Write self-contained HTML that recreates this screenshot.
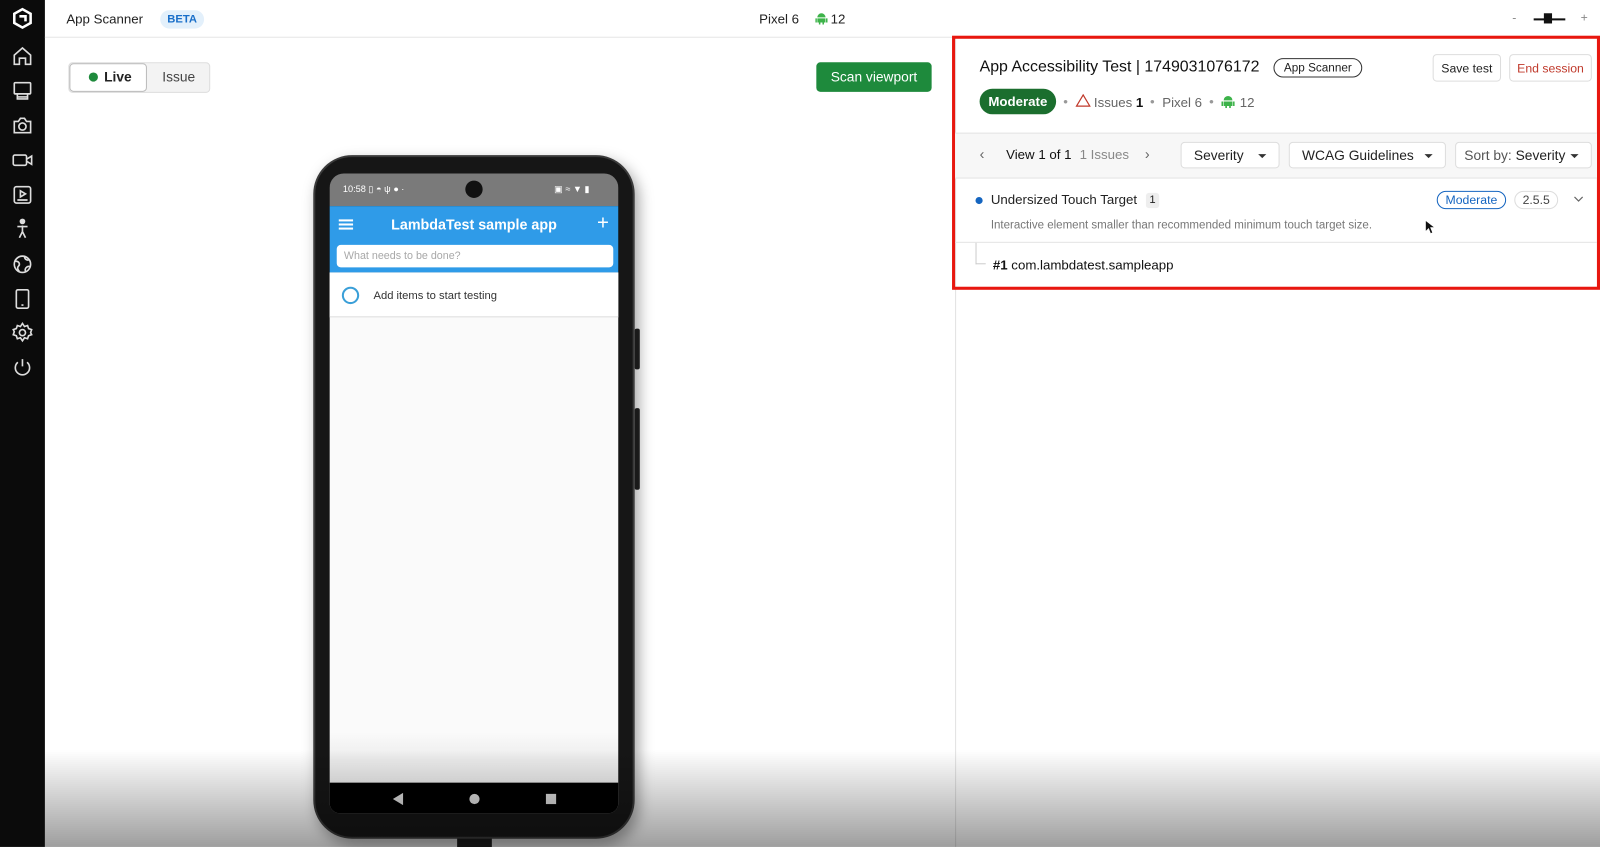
<!DOCTYPE html>
<html><head><meta charset="utf-8"><style>
*{box-sizing:border-box;margin:0;padding:0}
html,body{width:1600px;height:847px;overflow:hidden;background:#fff;font-family:"Liberation Sans",sans-serif;color:#222}
#w{position:absolute;left:0;top:0;width:1568px;height:830px;transform:scale(1.020408);transform-origin:0 0;overflow:hidden;background:#fff}
.a{position:absolute}
.side{left:0;top:0;width:44px;height:830px;background:#0b0b0b}
.side svg{position:absolute;left:11px;width:22px;height:22px}
.t{white-space:nowrap}
.btn{position:absolute;border:1px solid #ddd;border-radius:4px;background:#fff;font-size:12px;display:flex;align-items:center;justify-content:center}
.dd{position:absolute;top:139px;height:26px;border:1px solid #ddd;border-radius:4px;background:#fff;font-size:13.5px;display:flex;align-items:center;padding-left:12px;color:#222}
.dd:after{content:"";position:absolute;right:12px;top:11px;border:4px solid transparent;border-top:4px solid #333}
</style></head><body><div id="w">
<div class="a side">
<svg style="top:7px" viewBox="0 0 22 22"><path d="M11 2l8 4.5v9L11 20l-8-4.5v-9z" fill="none" stroke="#fff" stroke-width="2.5"/><path d="M8 9h6v5" fill="none" stroke="#fff" stroke-width="2.5"/></svg>
<svg style="top:44px" viewBox="0 0 22 22" fill="none" stroke="#ddd" stroke-width="1.6"><path d="M3 10l8-7 8 7v9h-5v-6h-6v6H3z"/></svg>
<svg style="top:78px" viewBox="0 0 22 22" fill="none" stroke="#ddd" stroke-width="1.6"><rect x="3" y="3" width="16" height="11" rx="1"/><path d="M6 14v5h10v-5M6 17h10"/></svg>
<svg style="top:112px" viewBox="0 0 22 22" fill="none" stroke="#ddd" stroke-width="1.6"><path d="M3 7h4l2-3h4l2 3h4v11H3z"/><circle cx="11" cy="12" r="3.5"/></svg>
<svg style="top:146px" viewBox="0 0 22 22" fill="none" stroke="#ddd" stroke-width="1.6"><rect x="2" y="6" width="13" height="10" rx="1.5"/><path d="M15 10l5-3v8l-5-3"/></svg>
<svg style="top:180px" viewBox="0 0 22 22" fill="none" stroke="#ddd" stroke-width="1.6"><rect x="3" y="3" width="16" height="16" rx="2"/><path d="M9 7l5 3-5 3z M6 16h10"/></svg>
<svg style="top:213px" viewBox="0 0 22 22" fill="none" stroke="#ddd" stroke-width="1.6"><circle cx="11" cy="4" r="2" fill="#ddd"/><path d="M6 9h10M11 8v6l-3 6M11 14l3 6"/></svg>
<svg style="top:248px" viewBox="0 0 22 22" fill="none" stroke="#ddd" stroke-width="1.6"><circle cx="11" cy="11" r="8"/><path d="M4 8c4 0 5 3 3 5s1 5 1 5M13 3c0 3 2 4 4 4M18 13c-3 0-5 2-4 5"/></svg>
<svg style="top:282px" viewBox="0 0 22 22" fill="none" stroke="#ddd" stroke-width="1.6"><rect x="5" y="2" width="12" height="18" rx="1.5"/><path d="M10 17h2"/></svg>
<svg style="top:315px" viewBox="0 0 22 22" fill="none" stroke="#ddd" stroke-width="1.6"><circle cx="11" cy="11" r="3"/><path d="M11 2l2 3 3-1 1 3 3 1-1 3 1 2-3 1-1 3-3-1-2 3-2-3-3 1-1-3-3-1 1-3-1-2 3-1 1-3 3 1z"/></svg>
<svg style="top:349px" viewBox="0 0 22 22" fill="none" stroke="#ddd" stroke-width="1.6"><path d="M11 3v7M6.5 6a7 7 0 1 0 9 0"/></svg>
</div>
<div class="a" style="left:44px;top:0;width:1524px;height:37px;border-bottom:1px solid #e6e6e6"></div>
<div class="a t" style="left:65px;top:11px;font-size:13px">App Scanner</div>
<div class="a t" style="left:157px;top:10px;width:43px;height:18px;border-radius:9px;background:#e3f0fb;color:#1a6fc9;font-size:11px;font-weight:bold;text-align:center;line-height:18px">BETA</div>
<div class="a t" style="left:744px;top:11px;font-size:13px">Pixel 6</div>
<svg class="a" style="left:799px;top:12px" width="12" height="12" viewBox="0 0 12 12"><path d="M2 5a4 4 0 0 1 8 0z M2 6h8v4H2z M0 6h1.5v4H0z M10.5 6H12v4h-1.5z M3.5 10h1.5v2H3.5z M7 10h1.5v2H7z" fill="#3db34a"/></svg>
<div class="a t" style="left:814px;top:11px;font-size:13px">12</div>
<div class="a t" style="left:1482px;top:10px;font-size:12px;color:#888">-</div>
<div class="a" style="left:1503px;top:18px;width:31px;height:1.5px;background:#111"></div>
<div class="a" style="left:1513px;top:13px;width:8px;height:10px;background:#111"></div>
<div class="a t" style="left:1549px;top:10px;font-size:12px;color:#888">+</div>
<div class="a" style="left:67px;top:61px;width:139px;height:30px;border:1px solid #ddd;border-radius:4px;background:#f3f3f3"></div>
<div class="a" style="left:68px;top:62px;width:76px;height:28px;border:1px solid #bbb;border-radius:4px;background:#fff"></div>
<div class="a" style="left:87px;top:71px;width:9px;height:9px;border-radius:50%;background:#1e8a3c"></div>
<div class="a t" style="left:102px;top:68px;font-size:13.5px;font-weight:bold;color:#222">Live</div>
<div class="a t" style="left:159px;top:68px;font-size:13.5px;color:#444">Issue</div>
<div class="a t" style="left:800px;top:61px;width:113px;height:29px;border-radius:4px;background:#1e8a3c;color:#fff;font-size:13.5px;text-align:center;line-height:29px">Scan viewport</div>
<div class="a" style="left:936px;top:37px;width:1px;height:793px;background:#e2e2e2"></div>
<div class="a" style="left:622px;top:322px;width:5px;height:40px;background:#222;border-radius:2px"></div>
<div class="a" style="left:622px;top:400px;width:5px;height:80px;background:#222;border-radius:2px"></div>
<div class="a" style="left:448px;top:818px;width:34px;height:14px;background:#222"></div>
<div class="a" style="left:307px;top:152px;width:315px;height:670px;border-radius:38px;background:#161616;border:2px solid #3a3a3a;box-shadow:4px 6px 14px rgba(0,0,0,.35)"></div>
<div class="a" style="left:323px;top:170px;width:283px;height:627px;border-radius:14px 14px 10px 10px;background:#000;overflow:hidden">
 <div class="a" style="left:0;top:0;width:283px;height:32px;background:#7a7a7a"></div>
 <div class="a t" style="left:13px;top:10px;font-size:9px;color:#fff">10:58 &#9647; &#9683; &#968; &#9679; &#183;</div>
 <div class="a t" style="left:220px;top:10px;font-size:9px;color:#fff">&#9635; &#8776; &#9660; &#9646;</div>
 <div class="a" style="left:133px;top:7px;width:17px;height:17px;border-radius:50%;background:#111"></div>
 <div class="a" style="left:0;top:32px;width:283px;height:65px;background:#2f9be8"></div>
 <div class="a" style="left:9px;top:45px;width:14px;height:2px;background:#fff;box-shadow:0 4px #fff,0 8px #fff"></div>
 <div class="a t" style="left:0;top:42px;width:283px;text-align:center;font-size:14px;font-weight:bold;color:#fff">LambdaTest sample app</div>
 <div class="a t" style="left:262px;top:38px;font-size:20px;color:#fff">+</div>
 <div class="a" style="left:7px;top:70px;width:271px;height:22px;border-radius:4px;background:#fff"></div>
 <div class="a t" style="left:14px;top:75px;font-size:10.5px;color:#a8a8a8">What needs to be done?</div>
 <div class="a" style="left:0;top:97px;width:283px;height:530px;background:linear-gradient(#fafafa 85%,#ededed 90%)"></div>
 <div class="a" style="left:0;top:97px;width:283px;height:44px;background:#fff;border-bottom:1px solid #ddd"></div>
 <div class="a" style="left:12px;top:111px;width:17px;height:17px;border-radius:50%;border:2px solid #3a9fd8"></div>
 <div class="a t" style="left:43px;top:114px;font-size:11px;color:#333">Add items to start testing</div>
 <div class="a" style="left:0;top:597px;width:283px;height:30px;background:#000"></div>
 <div class="a" style="left:62px;top:607px;width:0;height:0;border-top:6px solid transparent;border-bottom:6px solid transparent;border-right:10px solid #ddd"></div>
 <div class="a" style="left:137px;top:608px;width:10px;height:10px;border-radius:50%;background:#ddd"></div>
 <div class="a" style="left:212px;top:608px;width:10px;height:10px;background:#ddd"></div>
</div>
<div class="a" style="left:933px;top:35px;width:635px;height:249px;border:3px solid #e8170f"></div>
<div class="a t" style="left:960px;top:57px;font-size:15.6px;color:#111">App Accessibility Test | 1749031076172</div>
<div class="a t" style="left:1248px;top:57px;width:87px;height:19px;border:1px solid #333;border-radius:10px;font-size:11.5px;text-align:center;line-height:18px">App Scanner</div>
<div class="btn t" style="left:1404px;top:53px;width:67px;height:27px">Save test</div>
<div class="btn t" style="left:1479px;top:53px;width:81px;height:27px;color:#c0392b">End session</div>
<div class="a t" style="left:960px;top:87px;width:75px;height:25px;border-radius:13px;background:#1b6e2e;color:#fff;font-size:13px;font-weight:bold;text-align:center;line-height:25px">Moderate</div>
<div class="a t" style="left:1042px;top:92px;font-size:13px;color:#999">&#8226;</div>
<svg class="a" style="left:1054px;top:92px" width="15" height="13" viewBox="0 0 15 13"><path d="M7.5 1L14 12H1z" fill="none" stroke="#c0392b" stroke-width="1.2"/></svg>
<div class="a t" style="left:1072px;top:93px;font-size:13px;color:#666">Issues <b style="color:#111">1</b></div>
<div class="a t" style="left:1127px;top:92px;font-size:13px;color:#999">&#8226;</div>
<div class="a t" style="left:1139px;top:93px;font-size:13px;color:#666">Pixel 6</div>
<div class="a t" style="left:1185px;top:92px;font-size:13px;color:#999">&#8226;</div>
<svg class="a" style="left:1197px;top:93px" width="13" height="13" viewBox="0 0 12 12"><path d="M2 5a4 4 0 0 1 8 0z M2 6h8v4H2z M0 6h1.5v4H0z M10.5 6H12v4h-1.5z M3.5 10h1.5v2H3.5z M7 10h1.5v2H7z" fill="#3db34a"/></svg>
<div class="a t" style="left:1215px;top:93px;font-size:13px;color:#666">12</div>
<div class="a" style="left:936px;top:130px;width:629px;height:45px;background:#f7f7f7;border-top:1px solid #e4e4e4;border-bottom:1px solid #e4e4e4"></div>
<div class="a t" style="left:960px;top:143px;font-size:14px;color:#666">&#8249;</div>
<div class="a t" style="left:986px;top:144px;font-size:13px;color:#111">View 1 of 1</div>
<div class="a t" style="left:1058px;top:144px;font-size:13px;color:#888">1 Issues</div>
<div class="a t" style="left:1122px;top:143px;font-size:14px;color:#666">&#8250;</div>
<div class="dd t" style="left:1157px;width:97px">Severity</div>
<div class="dd t" style="left:1263px;width:154px">WCAG Guidelines</div>
<div class="dd t" style="left:1426px;width:134px;padding-left:8px"><span style="color:#555">Sort by:&nbsp;</span>Severity</div>
<div class="a" style="left:956px;top:193px;width:7px;height:7px;border-radius:50%;background:#1565c0"></div>
<div class="a t" style="left:971px;top:188px;font-size:13px;color:#222">Undersized Touch Target</div>
<div class="a t" style="left:1123px;top:189px;width:13px;height:15px;border-radius:3px;background:#eee;font-size:11px;text-align:center;line-height:15px">1</div>
<div class="a t" style="left:1408px;top:187px;width:68px;height:18px;border:1px solid #1565c0;border-radius:9px;color:#1565c0;font-size:12px;text-align:center;line-height:16px">Moderate</div>
<div class="a t" style="left:1484px;top:187px;width:43px;height:18px;border:1px solid #ddd;border-radius:9px;color:#444;font-size:12px;text-align:center;line-height:16px">2.5.5</div>
<svg class="a" style="left:1542px;top:192px" width="10" height="7" viewBox="0 0 10 7"><path d="M1 1l4 4 4-4" fill="none" stroke="#666" stroke-width="1.2"/></svg>
<div class="a t" style="left:971px;top:215px;font-size:11.3px;color:#777">Interactive element smaller than recommended minimum touch target size.</div>
<svg class="a" style="left:1396px;top:215px" width="10" height="15" viewBox="0 0 10 15"><path d="M1 1v11l3-3 2 5 2-1-2-5h4z" fill="#111" stroke="#fff" stroke-width=".6"/></svg>
<div class="a" style="left:936px;top:237px;width:629px;height:1px;background:#e4e4e4"></div>
<div class="a" style="left:956px;top:238px;width:10px;height:21px;border-left:1px solid #ccc;border-bottom:1px solid #ccc"></div>
<div class="a t" style="left:973px;top:252px;font-size:13px;color:#111"><b>#1</b> com.lambdatest.sampleapp</div>
<div class="a" style="left:44px;top:735px;width:1524px;height:95px;background:linear-gradient(rgba(0,0,0,0),rgba(0,0,0,.38));pointer-events:none"></div>
</div></body></html>
